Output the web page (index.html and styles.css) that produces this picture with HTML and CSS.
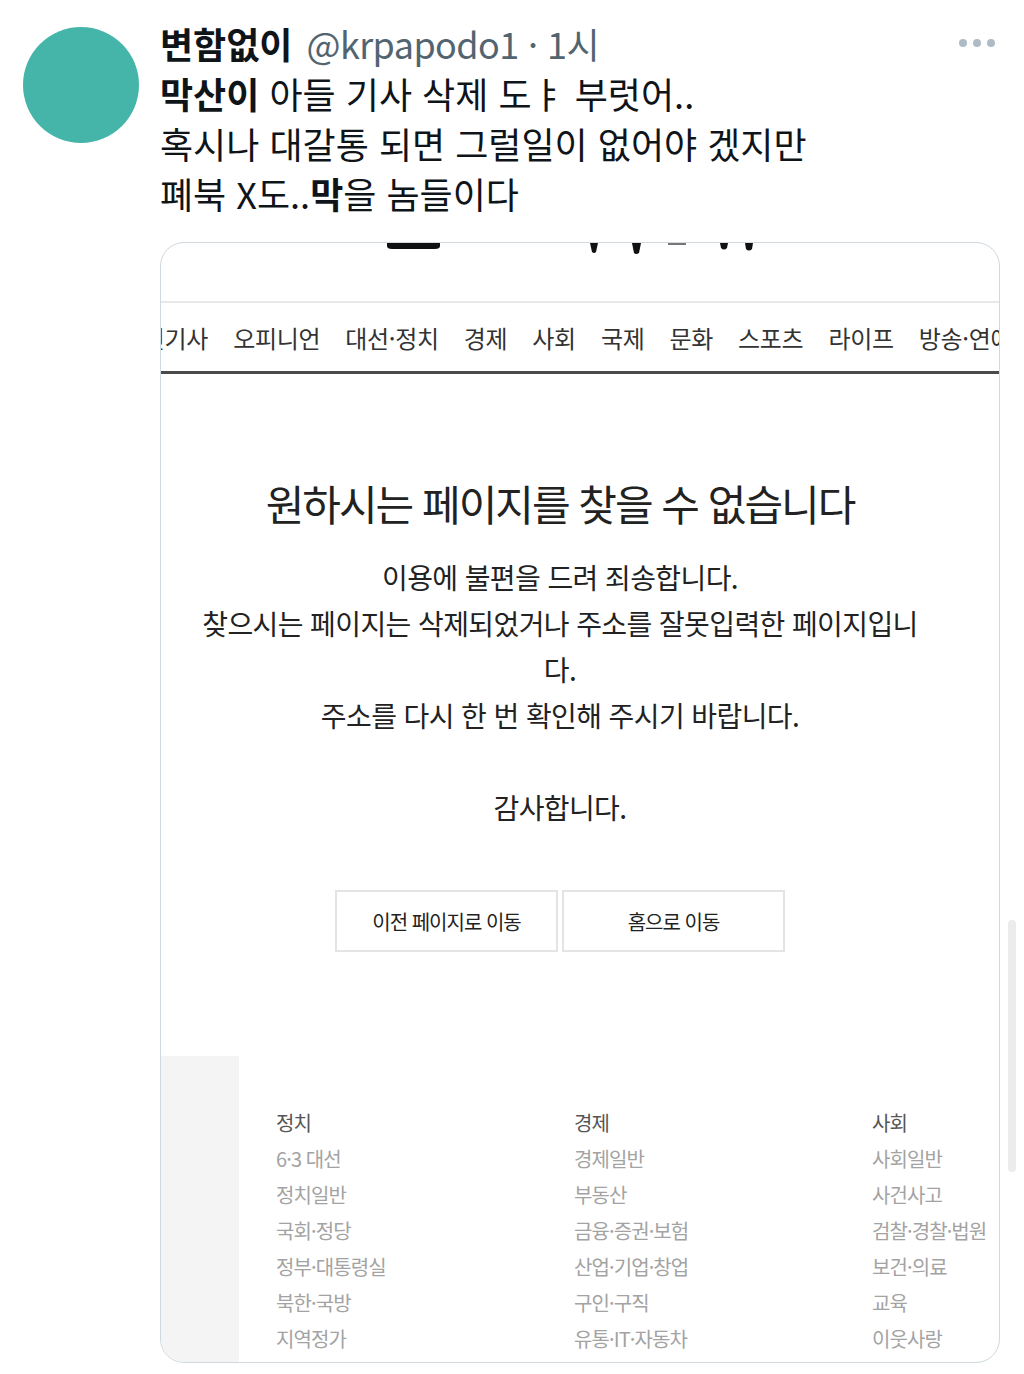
FILE: index.html
```
<!DOCTYPE html>
<html lang="ko">
<head>
    <meta charset="UTF-8">
    <title>변함없이 트윗</title>
    <link rel="stylesheet" href="styles.css">
</head>
<body>

<div class="tweet">
    <div class="avatar"></div>
    <div class="tweet-body">
        <div class="tweet-head">
            <span class="name">변함없이</span>
            <span class="handle">@krpapodo1 · 1시</span>
            <span class="more"><i></i><i></i><i></i></span>
        </div>
        <p class="tweet-text"><b>막산이</b> 아들 기사 삭제 도ㅑ 부럿어..<br>혹시나 대갈통 되면 그럴일이 없어야 겠지만<br>폐북 X도..<b>막</b>을 놈들이다</p>

        <div class="card">
            <div class="site-top">
                <svg class="logo-cut" width="838" height="14" viewBox="0 0 838 14">
                    <path d="M226 0 H279 V3 Q279 6 274 6 H231 Q226 6 226 3 Z" fill="#111"/>
                    <path d="M429 0 H437 L435 9 Q433 11 431 9 Z" fill="#111"/>
                    <path d="M471 0 H480 L478 10 Q475 12 473 10 Z" fill="#111"/>
                    <rect x="507" y="0" width="18" height="2" fill="#777"/>
                    <path d="M559 0 H567 L566 5 Q563 8 560 5 Z" fill="#111"/>
                    <path d="M584 0 H592 L591 6 Q588 9 585 6 Z" fill="#111"/>
                </svg>
            </div>
            <nav class="site-nav">
                <span class="first">최신기사</span>
                <span>오피니언</span>
                <span>대선·정치</span>
                <span>경제</span>
                <span>사회</span>
                <span>국제</span>
                <span>문화</span>
                <span>스포츠</span>
                <span>라이프</span>
                <span>방송·연예</span>
            </nav>

            <div class="error">
                <h1>원하시는 페이지를 찾을 수 없습니다</h1>
                <p>이용에 불편을 드려 죄송합니다.<br>찾으시는 페이지는 삭제되었거나 주소를 잘못입력한 페이지입니<br>다.<br>주소를 다시 한 번 확인해 주시기 바랍니다.<br><br>감사합니다.</p>
                <div class="error-buttons">
                    <button>이전 페이지로 이동</button>
                    <button>홈으로 이동</button>
                </div>
            </div>

            <div class="site-footer">
                <div class="footer-side"></div>
                <div class="footer-cols">
                    <ul>
                        <li class="head">정치</li>
                        <li>6·3 대선</li>
                        <li>정치일반</li>
                        <li>국회·정당</li>
                        <li>정부·대통령실</li>
                        <li>북한·국방</li>
                        <li>지역정가</li>
                    </ul>
                    <ul>
                        <li class="head">경제</li>
                        <li>경제일반</li>
                        <li>부동산</li>
                        <li>금융·증권·보험</li>
                        <li>산업·기업·창업</li>
                        <li>구인·구직</li>
                        <li>유통·IT·자동차</li>
                    </ul>
                    <ul>
                        <li class="head">사회</li>
                        <li>사회일반</li>
                        <li>사건사고</li>
                        <li>검찰·경찰·법원</li>
                        <li>보건·의료</li>
                        <li>교육</li>
                        <li>이웃사랑</li>
                    </ul>
                </div>
            </div>
        </div>
    </div>
</div>

<div class="scroll-thumb"></div>

</body>
</html>
```

FILE: styles.css
```
body { margin: 0; background: #fff; font-family: "Noto Sans CJK KR", "Noto Sans", sans-serif; color: #0f1419; }

.tweet { display: flex; gap: 21px; padding: 18px 24px 0 23px; }
.avatar { width: 116px; height: 116px; border-radius: 50%; background: #45b5a9; margin-top: 9px; flex: none; }
.tweet-body { width: 840px; }

.tweet-head { display: flex; align-items: center; height: 50px; font-size: 36px; }
.name { font-weight: 700; margin-right: 14px; }
.handle { color: #536471; letter-spacing: -0.6px; }
.more { margin-left: auto; margin-right: 5px; display: flex; gap: 6px; }
.more i { width: 8px; height: 8px; border-radius: 50%; background: #aebbc5; }

.tweet-text { margin: 0; font-size: 36px; line-height: 50px; }
.tweet-text b { font-weight: 700; }

.card {
    margin-top: 24px;
    height: 1119px;
    border: 1px solid #cfd9de;
    border-radius: 24px;
    overflow: hidden;
    background: #fff;
}
.site-top { height: 58px; border-bottom: 2px solid #e8e8e8; }
.logo-cut { display: block; }

.site-nav {
    display: flex;
    align-items: center;
    gap: 25px;
    height: 68px;
    border-bottom: 3px solid #4a4a4a;
    white-space: nowrap;
    overflow: hidden;
    font-size: 24px;
    letter-spacing: -0.3px;
    color: #333;
}
.site-nav .first { margin-left: -40px; }

.error { padding: 99px 40px 0 0; text-align: center; color: #222; }
.error h1 { margin: 0; font-size: 42px; line-height: 60px; font-weight: 400; letter-spacing: -2px; }
.error p { margin: 21px 0 0; font-size: 28px; line-height: 46px; letter-spacing: -0.6px; }

.error-buttons { display: flex; justify-content: center; gap: 4px; margin-top: 60px; }
.error-buttons button {
    width: 223px;
    height: 62px;
    background: #fff;
    border: 2px solid #e4e4e4;
    font-family: inherit;
    font-size: 20px;
    letter-spacing: -1px;
    color: #222;
}

.site-footer { display: flex; margin-top: 104px; height: 320px; }
.footer-side { flex: none; width: 78px; background: #f4f4f4; }
.footer-cols { display: flex; padding: 49px 0 0 37px; }
.footer-cols ul { list-style: none; margin: 0; padding: 0; width: 298px; flex: none; }
.footer-cols li { font-size: 20px; line-height: 36px; letter-spacing: -0.9px; color: #a3a3a3; white-space: nowrap; }
.footer-cols li.head { color: #555; }

.scroll-thumb {
    position: absolute;
    top: 920px;
    right: 8px;
    width: 8px;
    height: 252px;
    border-radius: 4px;
    background: #ececec;
}
```
